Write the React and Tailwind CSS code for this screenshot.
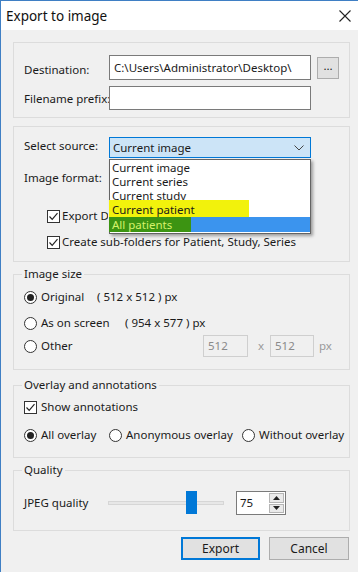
import React from "react";

function Check() {
  return (
    <span className="inline-flex h-[13px] w-[13px] shrink-0 items-center justify-center border border-[#333] bg-white">
      <svg width="11" height="11" viewBox="0 0 11 11">
        <path d="M1.5 5.5 L4.2 8.3 L9.5 2.2" fill="none" stroke="#222" strokeWidth="1.2" />
      </svg>
    </span>
  );
}

function Radio({ on }) {
  return (
    <span className="inline-flex h-[13px] w-[13px] shrink-0 items-center justify-center rounded-full border border-[#333] bg-white">
      {on && <span className="h-[7px] w-[7px] rounded-full bg-[#222]" />}
    </span>
  );
}

function Legend({ children }) {
  return <legend className="ml-[-2px] px-[2px] text-[11.5px] leading-[14px] text-[#1a1a1a]">{children}</legend>;
}

export default function App() {
  return (
    <div className="h-[572px] w-[358px] overflow-hidden whitespace-nowrap border-l border-t border-[#3f7fc4] bg-[#f0f0f0] font-['Noto_Sans',sans-serif] text-[11.5px] leading-[14px] text-[#1a1a1a]">
      {/* title bar */}
      <div className="flex h-[29px] items-center justify-between bg-white pl-[5px] pr-[6px]">
        <span className="text-[13.5px] leading-[18px] text-[#111]">Export to image</span>
        <svg width="12" height="12" viewBox="0 0 12 12" className="mr-[1px]">
          <path d="M0.5 0.5 L11.5 11.5 M11.5 0.5 L0.5 11.5" stroke="#222" strokeWidth="1.1" />
        </svg>
      </div>

      <div className="pl-[12px] pr-[8px]">
        {/* group 1 */}
        <div className="mt-[12px] h-[76px] border border-[#dcdcdc] pl-[10px] pt-[12px]">
          <div className="flex h-[25px] items-center">
            <span className="w-[85px] pt-[4px]">Destination:</span>
            <div className="flex h-[25px] w-[202px] items-center border border-[#7a7a7a] bg-white pl-[4px]">C:\Users\Administrator\Desktop\</div>
            <div className="ml-[6px] flex h-[22px] w-[22px] items-center justify-center border border-[#adadad] bg-[#e1e1e1] pb-[4px]">...</div>
          </div>
          <div className="mt-[6px] flex h-[24px] items-center">
            <span className="w-[85px] pt-[2px]">Filename prefix:</span>
            <div className="h-[24px] w-[202px] border border-[#7a7a7a] bg-white" />
          </div>
        </div>

        {/* group 2 */}
        <div className="mt-[8px] h-[136px] border border-[#dcdcdc] pl-[10px] pt-[10px]">
          <div className="flex h-[21px] items-center">
            <span className="w-[85px] pb-[3px]">Select source:</span>
            <div className="relative w-[202px]">
              <div className="flex h-[21px] items-center justify-between border border-[#0078d7] bg-[#cce4f7] pl-[3px] pr-[6px]">
                <span className="pt-[1px]">Current image</span>
                <svg width="10" height="6" viewBox="0 0 10 6">
                  <path d="M0.5 0.5 L5 5 L9.5 0.5" fill="none" stroke="#444" strokeWidth="1" />
                </svg>
              </div>
              <div className="absolute left-0 top-[22px] z-10 w-[202px] border border-[#646464] bg-white py-[1px] shadow-[2px_2px_3px_rgba(0,0,0,0.35)]">
                <div className="h-[14px] pl-[2px] leading-[14px]">Current image</div>
                <div className="h-[14px] pl-[2px] leading-[14px]">Current series</div>
                <div className="h-[14px] pl-[2px] leading-[14px]">Current study</div>
                <div className="relative h-[14px] pl-[2px] leading-[14px]">
                  <span className="absolute left-[-1px] top-[-3px] h-[17px] w-[140px] bg-[#f2f20c]" />
                  <span className="relative">Current patient</span>
                </div>
                <div className="relative h-[15px] bg-[#3b94ee] pl-[2px] leading-[15px] text-[#d6f26a]">
                  <span className="absolute left-[-1px] top-0 h-[15px] w-[82px] bg-[#3c9412]" />
                  <span className="relative">All patients</span>
                </div>
              </div>
            </div>
          </div>
          <div className="mt-[9px] flex h-[22px] items-center">
            <span className="w-[85px]">Image format:</span>
          </div>
          <div className="mt-[20px] flex h-[14px] items-center gap-[2px] pl-[23px]">
            <Check />
            <span className="w-[46px] overflow-hidden">Export DICOMDIR</span>
          </div>
          <div className="mt-[12px] flex h-[14px] items-center gap-[2px] pl-[23px]">
            <Check />
            <span>Create sub-folders for Patient, Study, Series</span>
          </div>
        </div>

        {/* image size */}
        <fieldset className="mt-[5px] h-[103px] border border-[#dcdcdc] pl-[10px]">
          <Legend>Image size</Legend>
          <div className="mt-[8px] flex h-[16px] items-center">
            <Radio on />
            <span className="ml-[4px] w-[56px]">Original</span>
            <span>( 512 x 512 ) px</span>
          </div>
          <div className="mt-[10px] flex h-[16px] items-center">
            <Radio />
            <span className="ml-[4px] w-[84px]">As on screen</span>
            <span>( 954 x 577 ) px</span>
          </div>
          <div className="mt-[4px] flex h-[22px] items-center">
            <Radio />
            <span className="ml-[4px] w-[162px]">Other</span>
            <div className="flex h-[22px] w-[45px] items-center border border-[#cfcfcf] bg-[#f0f0f0] pl-[4px] text-[#8a8a8a]">512</div>
            <span className="ml-[10px] w-[12px] text-[#9a9a9a]">x</span>
            <div className="flex h-[22px] w-[44px] items-center border border-[#cfcfcf] bg-[#f0f0f0] pl-[4px] text-[#8a8a8a]">512</div>
            <span className="ml-[5px] text-[#9a9a9a]">px</span>
          </div>
        </fieldset>

        {/* overlay */}
        <fieldset className="mt-[8px] h-[80px] border border-[#dcdcdc] pl-[10px]">
          <Legend>Overlay and annotations</Legend>
          <div className="mt-[7px] flex h-[16px] items-center gap-[4px]">
            <Check />
            <span>Show annotations</span>
          </div>
          <div className="mt-[12px] flex h-[16px] items-center">
            <Radio on />
            <span className="ml-[4px] w-[68px]">All overlay</span>
            <Radio />
            <span className="ml-[4px] w-[116px]">Anonymous overlay</span>
            <Radio />
            <span className="ml-[4px]">Without overlay</span>
          </div>
        </fieldset>

        {/* quality */}
        <fieldset className="mt-[5px] h-[68px] border border-[#dcdcdc] pl-[10px]">
          <Legend>Quality</Legend>
          <div className="mt-[14px] flex h-[24px] items-center">
            <span className="w-[84px]">JPEG quality</span>
            <div className="relative flex h-[24px] w-[116px] items-center">
              <div className="h-[4px] w-full border border-[#d6d6d6] bg-[#e7e7e7]" />
              <span className="absolute left-[78px] top-0 h-[23px] w-[11px] bg-[#0078d7]" />
            </div>
            <div className="ml-[12px] flex h-[24px] w-[50px] border border-[#7a7a7a] bg-white">
              <span className="flex flex-1 items-center pl-[3px]">75</span>
              <div className="flex w-[17px] flex-col gap-[1px] p-[1px]">
                <span className="flex flex-1 items-center justify-center border border-[#b5b5b5] bg-[#eaeaea]">
                  <svg width="7" height="4" viewBox="0 0 7 4"><path d="M0 4 L3.5 0 L7 4 Z" fill="#222" /></svg>
                </span>
                <span className="flex flex-1 items-center justify-center border border-[#b5b5b5] bg-[#eaeaea]">
                  <svg width="7" height="4" viewBox="0 0 7 4"><path d="M0 0 L3.5 4 L7 0 Z" fill="#222" /></svg>
                </span>
              </div>
            </div>
          </div>
        </fieldset>

        {/* buttons */}
        <div className="mt-[6px] flex justify-end gap-[9px] pr-[1px]">
          <button className="h-[23px] w-[79px] border border-[#0078d7] bg-[#e1e1e1] text-[12px] shadow-[inset_0_0_0_1px_#0078d7]">Export</button>
          <button className="h-[23px] w-[80px] border border-[#adadad] bg-[#e1e1e1] text-[12px]">Cancel</button>
        </div>
      </div>
    </div>
  );
}
